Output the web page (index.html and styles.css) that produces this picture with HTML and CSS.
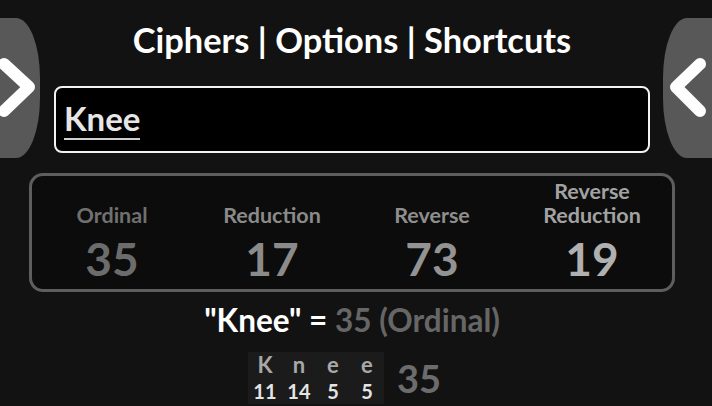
FILE: index.html
```html
<!DOCTYPE html>
<html>
<head>
<meta charset="utf-8">
<link rel="stylesheet" href="styles.css">
</head>
<body>
<div class="tab tab-left"><svg width="40" height="140" viewBox="0 0 40 140"><polyline points="4,46 29,69 4,93" fill="none" stroke="#fff" stroke-width="12" stroke-linecap="round" stroke-linejoin="round"/></svg></div>
<div class="tab tab-right"><svg width="49" height="140" viewBox="0 0 49 140"><polyline points="37,46 13,69 37,93" fill="none" stroke="#fff" stroke-width="12" stroke-linecap="round" stroke-linejoin="round"/></svg></div>
<main class="page">
  <h1 class="title">Ciphers | Options | Shortcuts</h1>
  <div class="input-box"><span class="input-text">Knee</span></div>
  <div class="results">
    <div class="col c-ord"><div class="label">Ordinal</div><div class="num">35</div></div>
    <div class="col c-red"><div class="label">Reduction</div><div class="num">17</div></div>
    <div class="col c-rev"><div class="label">Reverse</div><div class="num">73</div></div>
    <div class="col c-rr"><div class="label">Reverse<br>Reduction</div><div class="num">19</div></div>
  </div>
  <div class="sentence">"Knee" = <span class="sent-val">35 (Ordinal)</span></div>
  <div class="breakdown">
    <div class="letters">
      <div class="cell"><span class="ch">K</span><span class="v">11</span></div>
      <div class="cell"><span class="ch">n</span><span class="v">14</span></div>
      <div class="cell"><span class="ch">e</span><span class="v">5</span></div>
      <div class="cell"><span class="ch">e</span><span class="v">5</span></div>
    </div>
    <div class="total">35</div>
  </div>
</main>
</body>
</html>
```
FILE: styles.css
```css
html, body {
  margin: 0;
  padding: 0;
  height: 100%;
  overflow: hidden;
}
body {
  background: #121212;
  font-family: Lato, "Open Sans", sans-serif;
  color: #fff;
}
.page {
  display: flex;
  flex-direction: column;
  align-items: center;
  padding-right: 8px;
}
.title {
  margin: 20px 0 0;
  font-size: 34.4px;
  font-weight: 700;
  line-height: 40px;
  color: #fff;
}
.input-box {
  box-sizing: border-box;
  margin-top: 26px;
  width: 596px;
  height: 67px;
  border: 2px solid #f2f2f2;
  border-radius: 8px;
  background: #000;
  padding: 14px 0 0 8px;
}
.input-text {
  display: inline-block;
  font-size: 33px;
  font-weight: 700;
  line-height: 32px;
  color: #e6e6e6;
  border-bottom: 2px solid #cfcfcf;
  padding-bottom: 4px;
}
.results {
  box-sizing: border-box;
  margin-top: 20px;
  width: 646px;
  height: 119px;
  border: 3px solid #5e5e5e;
  border-radius: 14px;
  background: #0c0c0c;
  display: grid;
  grid-template-columns: repeat(4, 1fr);
  align-items: end;
  padding-bottom: 5px;
}
.col {
  display: flex;
  flex-direction: column;
  align-items: center;
}
.label {
  font-size: 21.5px;
  font-weight: 700;
  line-height: 24px;
  text-align: center;
}
.num {
  font-size: 46px;
  font-weight: 700;
  line-height: 50px;
  margin-top: 7px;
}
.c-ord .label { color: #707070; }
.c-ord .num { color: #6c6c6c; }
.c-red .label { color: #8a8a8a; }
.c-red .num { color: #8b8b8b; }
.c-rev .label { color: #8e8e8e; }
.c-rev .num { color: #939393; }
.c-rr .label { color: #a2a2a2; }
.c-rr .num { color: #b0b0b0; }
.sentence {
  margin-top: 10px;
  font-size: 31.5px;
  font-weight: 700;
  line-height: 36px;
  color: #fff;
}
.sent-val {
  color: #666;
}
.breakdown {
  margin-top: 14px;
  display: flex;
  align-items: center;
  gap: 13px;
  margin-right: 15px;
}
.letters {
  display: flex;
  background: #1b1b1b;
}
.cell {
  display: flex;
  flex-direction: column;
  align-items: center;
  width: 34px;
}
.ch {
  font-size: 22px;
  line-height: 26px;
  color: #a8a8a8;
  font-weight: 700;
}
.v {
  font-size: 20px;
  line-height: 26px;
  color: #e4e4e4;
  font-weight: 700;
}
.total {
  font-size: 38px;
  font-weight: 700;
  color: #6c6c6c;
  line-height: 44px;
}
.tab {
  position: absolute;
  top: 18px;
  height: 140px;
  background: #585858;
}
.tab svg { display: block; }
.tab-left {
  left: 0;
  width: 40px;
  border-radius: 0 24px 24px 0 / 0 60px 60px 0;
}
.tab-right {
  right: 0;
  width: 49px;
  border-radius: 24px 0 0 24px / 60px 0 0 60px;
}
```
